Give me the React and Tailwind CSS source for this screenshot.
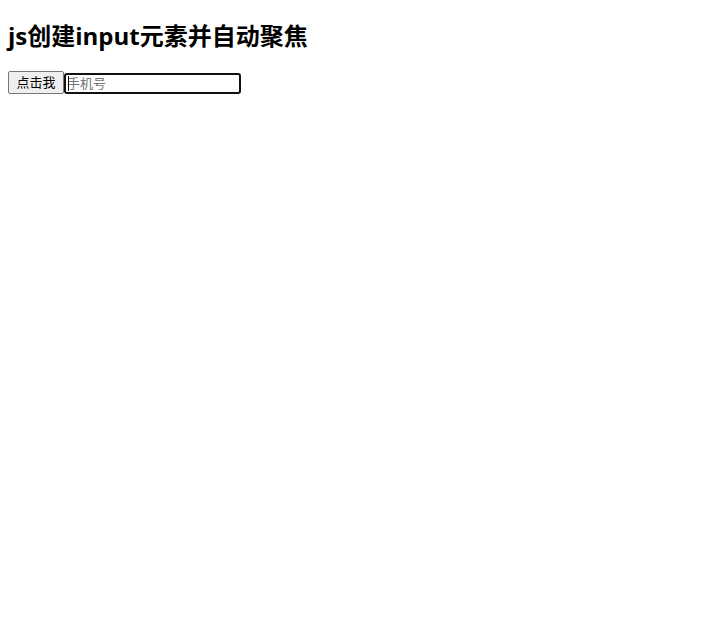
import { useState } from 'react';

const App = () => {
  const [phone, setPhone] = useState('');
  const [visible, setVisible] = useState(true);
  const [focused, setFocused] = useState(true);

  return (
    <main className="px-2 py-5 bg-white text-black">
      <h2 className="mb-[19px] text-2xl leading-8 font-bold font-['Open_Sans','Noto_Sans_CJK_SC',sans-serif]">
        js创建input元素并自动聚焦
      </h2>

      <div className="flex items-end font-['Liberation_Sans','Noto_Sans_CJK_SC',sans-serif]">
        <button
          type="button"
          onClick={() => setVisible(true)}
          className="h-[23px] w-14 shrink-0 rounded-[2px] border border-[#767676] bg-[#efefef] pt-px text-center text-[13px] leading-5"
        >
          点击我
        </button>

        {visible && (
          <div className="relative flex">
            <input
              autoFocus
              type="tel"
              name="phone"
              aria-label="手机号"
              placeholder="手机号"
              value={phone}
              onChange={(e) => setPhone(e.target.value)}
              onFocus={() => setFocused(true)}
              onBlur={() => setFocused(false)}
              className="h-[21px] w-[177px] rounded-[3px] border-2 border-[#101010] bg-white px-px text-[13px] leading-4 outline-none placeholder:text-[#757575] placeholder-shown:caret-transparent"
            />
            {/* steady caret while the field is empty */}
            {focused && !phone && (
              <span className="pointer-events-none absolute inset-y-[3px] left-1 w-px bg-black" />
            )}
          </div>
        )}
      </div>
    </main>
  );
};

export default App;
